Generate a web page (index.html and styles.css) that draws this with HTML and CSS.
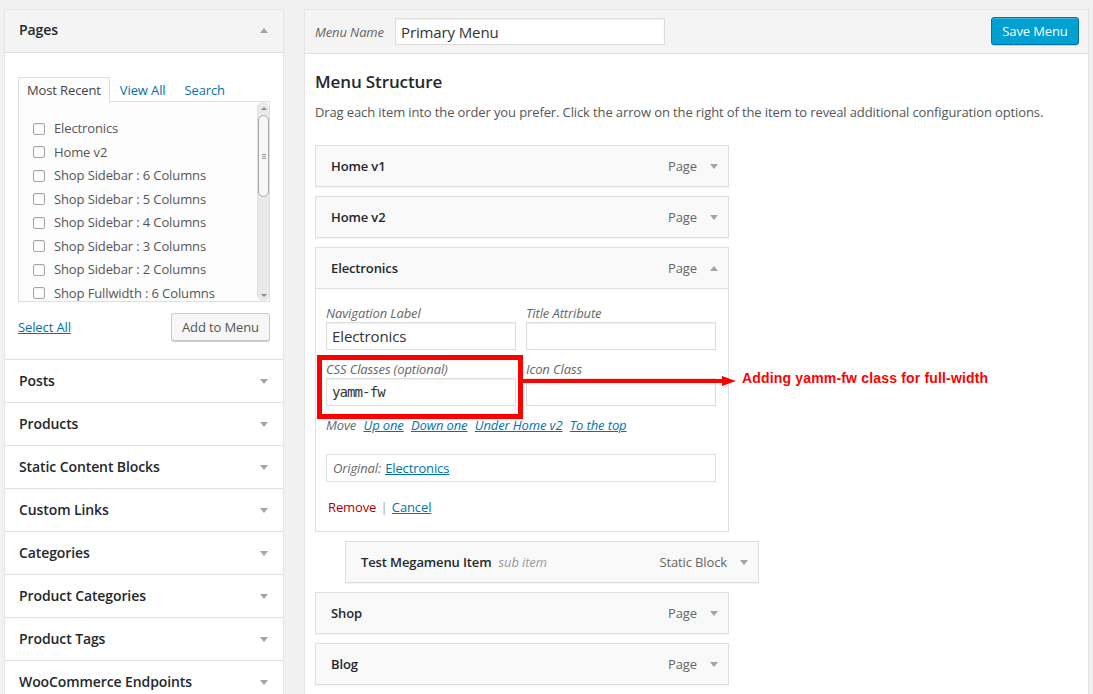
FILE: index.html
```html
<!DOCTYPE html>
<html>
<head>
<meta charset="utf-8">
<title>Menus</title>
<link rel="stylesheet" href="styles.css">
</head>
<body>
<div class="page">
  <aside class="side">
    <section class="acc open">
      <div class="acc-h"><h3>Pages</h3><span class="tri up"></span></div>
      <div class="acc-b">
        <ul class="tabs">
          <li class="active">Most Recent</li>
          <li><a>View All</a></li>
          <li><a>Search</a></li>
        </ul>
        <div class="tabs-panel">
          <ul class="checklist">
            <li><span class="cb"></span>Electronics</li>
            <li><span class="cb"></span>Home v2</li>
            <li><span class="cb"></span>Shop Sidebar : 6 Columns</li>
            <li><span class="cb"></span>Shop Sidebar : 5 Columns</li>
            <li><span class="cb"></span>Shop Sidebar : 4 Columns</li>
            <li><span class="cb"></span>Shop Sidebar : 3 Columns</li>
            <li><span class="cb"></span>Shop Sidebar : 2 Columns</li>
            <li><span class="cb"></span>Shop Fullwidth : 6 Columns</li>
          </ul>
          <div class="sbar">
            <span class="sb-btn"><span class="sb-up"></span></span>
            <span class="sb-thumb"><span class="grip"></span></span>
            <span class="sb-track"></span>
            <span class="sb-btn"><span class="sb-down"></span></span>
          </div>
        </div>
        <div class="actions">
          <a class="link">Select All</a>
          <span class="btn">Add to Menu</span>
        </div>
      </div>
    </section>
    <section class="acc"><div class="acc-h"><h3>Posts</h3><span class="tri"></span></div></section>
    <section class="acc"><div class="acc-h"><h3>Products</h3><span class="tri"></span></div></section>
    <section class="acc"><div class="acc-h"><h3>Static Content Blocks</h3><span class="tri"></span></div></section>
    <section class="acc"><div class="acc-h"><h3>Custom Links</h3><span class="tri"></span></div></section>
    <section class="acc"><div class="acc-h"><h3>Categories</h3><span class="tri"></span></div></section>
    <section class="acc"><div class="acc-h"><h3>Product Categories</h3><span class="tri"></span></div></section>
    <section class="acc"><div class="acc-h"><h3>Product Tags</h3><span class="tri"></span></div></section>
    <section class="acc"><div class="acc-h"><h3>WooCommerce Endpoints</h3><span class="tri"></span></div></section>
  </aside>

  <main class="menu">
    <div class="menu-head">
      <label class="mn-label">Menu Name</label>
      <div class="field name-field">Primary Menu</div>
      <span class="btn-primary">Save Menu</span>
    </div>
    <div class="menu-body">
      <h3 class="ms-title">Menu Structure</h3>
      <p class="ms-desc">Drag each item into the order you prefer. Click the arrow on the right of the item to reveal additional configuration options.</p>

      <div class="item">
        <div class="item-h"><span class="it-title">Home v1</span><span class="it-type">Page</span><span class="tri"></span></div>
      </div>
      <div class="item">
        <div class="item-h"><span class="it-title">Home v2</span><span class="it-type">Page</span><span class="tri"></span></div>
      </div>
      <div class="item">
        <div class="item-h"><span class="it-title">Electronics</span><span class="it-type">Page</span><span class="tri up"></span></div>
        <div class="item-s">
          <div class="grid">
            <div class="fld"><span class="lbl">Navigation Label</span><div class="field">Electronics</div></div>
            <div class="fld"><span class="lbl">Title Attribute</span><div class="field"></div></div>
            <div class="fld"><span class="lbl">CSS Classes (optional)</span><div class="field mono">yamm-fw</div></div>
            <div class="fld"><span class="lbl">Icon Class</span><div class="field"></div></div>
          </div>
          <div class="move">Move <a>Up one</a> <a>Down one</a> <a>Under Home v2</a> <a>To the top</a></div>
          <div class="orig"><em>Original:</em> <a>Electronics</a></div>
          <div class="ctrl"><span class="remove">Remove</span> <span class="sep">|</span> <a>Cancel</a></div>
        </div>
      </div>
      <div class="item sub">
        <div class="item-h"><span class="it-title">Test Megamenu Item</span><span class="it-sub">sub item</span><span class="it-type">Static Block</span><span class="tri"></span></div>
      </div>
      <div class="item">
        <div class="item-h"><span class="it-title">Shop</span><span class="it-type">Page</span><span class="tri"></span></div>
      </div>
      <div class="item">
        <div class="item-h"><span class="it-title">Blog</span><span class="it-type">Page</span><span class="tri"></span></div>
      </div>
    </div>
  </main>

  <div class="annot-box"></div>
  <svg class="annot-arrow" width="216" height="12" viewBox="0 0 216 12">
    <rect x="0" y="4" width="202" height="4" fill="#f00"/>
    <polygon points="200,1 214,6 200,11" fill="#f00"/>
  </svg>
  <div class="annot-text">Adding yamm-fw class for full-width</div>
</div>
</body>
</html>
```

FILE: styles.css
```css
* { box-sizing: border-box; }
html, body { margin: 0; }
body {
  background: #f1f1f1;
  font-family: "Open Sans", "DejaVu Sans", sans-serif;
  font-size: 13px;
  letter-spacing: -0.12px;
  color: #444;
}
a { color: #0073aa; cursor: pointer; }
ul { list-style: none; margin: 0; padding: 0; }
h3 { margin: 0; }

.page {
  position: relative;
  display: flex;
  align-items: flex-start;
  gap: 20px;
  padding: 9px 4px 0 4px;
  height: 694px;
  overflow: hidden;
}

/* ---------- left accordion ---------- */
.side {
  width: 280px;
  flex: none;
  background: #fff;
  border: 1px solid #e5e5e5;
  box-shadow: 0 1px 1px rgba(0,0,0,.04);
}
.acc + .acc { border-top: 1px solid #e1e1e1; }
.acc-h {
  height: 42px;
  display: flex;
  align-items: center;
  justify-content: space-between;
  padding: 0 15px 2px 14px;
}
.acc-h .tri { margin-top: 2px; }
.acc-h h3 {
  font-size: 14px;
  font-weight: 600;
  color: #23282d;
  letter-spacing: -0.1px;
}
.open .acc-h {
  height: 43px;
  padding-bottom: 4px;
  background: #f4f4f4;
  border-bottom: 1px solid #e1e1e1;
}
.tri {
  width: 0; height: 0;
  border-left: 4px solid transparent;
  border-right: 4px solid transparent;
  border-top: 5px solid #a0a5aa;
}
.tri.up {
  border-top: 0;
  border-bottom: 5px solid #a0a5aa;
}
.acc-b {
  padding: 24px 13px 18px 13px;
}
.tabs {
  display: flex;
  height: 25px;
  position: relative;
  z-index: 1;
  margin-bottom: -1px;
}
.tabs li {
  padding: 0 8px;
  margin-right: 1px;
  line-height: 25px;
  border: 1px solid transparent;
  border-bottom: 0;
}
.tabs li a { text-decoration: none; color: #0073aa; }
.tabs li.active {
  border-color: #dfdfdf;
  background: #fdfdfd;
  color: #444;
  height: 26px;
}
.tabs-panel {
  height: 201px;
  border: 1px solid #dfdfdf;
  background: #fdfdfd;
  display: flex;
  overflow: hidden;
}
.checklist {
  flex: 1;
  padding: 15px 0 0 14px;
  color: #555;
}
.checklist li {
  height: 23.5px;
  line-height: 23.5px;
  display: flex;
  align-items: center;
  white-space: nowrap;
}
.cb {
  width: 12px; height: 12px;
  border: 1px solid #a5a5a5;
  border-radius: 2px;
  background: #fff;
  margin-right: 9px;
  flex: none;
  box-shadow: inset 0 1px 2px rgba(0,0,0,.08);
}
.sbar {
  width: 12px;
  flex: none;
  display: flex;
  flex-direction: column;
  background: #e9e9e9;
  border-left: 1px solid #e0e0e0;
  border-radius: 6px;
}
.sb-btn {
  height: 12px;
  display: flex;
  align-items: center;
  justify-content: center;
  flex: none;
}
.sb-up, .sb-down {
  width: 0; height: 0;
  border-left: 3px solid transparent;
  border-right: 3px solid transparent;
}
.sb-up { border-bottom: 3px solid #8a8a8a; }
.sb-down { border-top: 3px solid #8a8a8a; }
.sb-thumb {
  height: 82px;
  flex: none;
  margin: 1px 0;
  background: #f7f7f7;
  border: 1px solid #a8a8a8;
  border-radius: 6px;
  display: flex;
  align-items: center;
  justify-content: center;
}
.grip {
  width: 4px; height: 5px;
  border-top: 1px solid #999;
  border-bottom: 1px solid #999;
  position: relative;
}
.grip::after {
  content: "";
  position: absolute;
  left: 0; right: 0; top: 1px;
  border-top: 1px solid #999;
}
.sb-track { flex: 1; }
.actions {
  display: flex;
  align-items: center;
  justify-content: space-between;
  margin-top: 11px;
}
.link { text-decoration: underline; }
.btn {
  height: 28px;
  width: 99px;
  padding: 0;
  display: inline-flex;
  align-items: center;
  justify-content: center;
  white-space: nowrap;
  border: 1px solid #ccc;
  border-radius: 3px;
  background: #f7f7f7;
  color: #555;
  font-size: 13px;
  box-shadow: 0 1px 0 #ccc;
}

/* ---------- right menu panel ---------- */
.menu {
  flex: 1;
  height: 700px;
  background: #fff;
  border: 1px solid #e5e5e5;
  box-shadow: 0 1px 1px rgba(0,0,0,.04);
}
.menu-head {
  height: 44px;
  display: flex;
  align-items: center;
  padding: 0 9px 0 10px;
  background: #f4f4f4;
  border-bottom: 1px solid #e1e1e1;
}
.mn-label {
  width: 80px;
  font-style: italic;
  color: #666;
}
.field {
  height: 28px;
  border: 1px solid #ddd;
  background: #fff;
  box-shadow: inset 0 1px 2px rgba(0,0,0,.07);
  padding: 0 5px;
  display: flex;
  align-items: center;
  font-size: 15px;
  color: #333;
}
.name-field { width: 270px; height: 27px; }
.btn-primary {
  margin-left: auto;
  height: 28px;
  width: 88px;
  display: inline-flex;
  align-items: center;
  justify-content: center;
  background: #00a0d2;
  border: 1px solid #0073aa;
  border-radius: 3px;
  color: #fff;
  box-shadow: inset 0 1px 0 rgba(120,200,230,.5), 0 1px 0 rgba(0,0,0,.15);
  margin-top: -1px;
}
.menu-body {
  padding: 17px 10px 0 10px;
}
.ms-title {
  font-size: 17px;
  font-weight: 600;
  color: #23282d;
  line-height: 22px;
}
.ms-desc {
  margin: 10px 0 24px;
  line-height: 18px;
  color: #555;
}
.item {
  width: 414px;
  margin-bottom: 9px;
}
.item.sub { margin-left: 30px; }
.item-h {
  height: 42px;
  border: 1px solid #dfdfdf;
  background: #f9f9f9;
  display: flex;
  align-items: center;
  padding: 0 10px 0 15px;
  box-shadow: 0 1px 1px rgba(0,0,0,.04);
}
.it-title {
  font-weight: 600;
  color: #23282d;
}
.it-sub {
  font-style: italic;
  color: #999;
  margin-left: 7px;
}
.it-type {
  margin-left: auto;
  color: #666;
  margin-right: 13px;
}
.item-s {
  border: 1px solid #dfdfdf;
  border-top: 0;
  padding: 15px 10px 15px 10px;
  background: #fff;
}
.grid {
  display: grid;
  grid-template-columns: 190px 190px;
  column-gap: 10px;
  row-gap: 10px;
}
.lbl {
  display: block;
  height: 18px;
  line-height: 18px;
  font-style: italic;
  color: #666;
}
.mono {
  font-family: "DejaVu Sans Mono", monospace;
  font-size: 14px;
  letter-spacing: -0.9px;
  color: #333;
}
.move {
  margin-top: 10px;
  line-height: 18px;
  font-style: italic;
  color: #666;
}
.move a { margin-left: 4px; text-decoration: underline; }
.orig {
  margin-top: 20px;
  width: 390px;
  height: 28px;
  border: 1px solid #dfdfdf;
  display: flex;
  align-items: center;
  padding: 0 6px;
  gap: 4px;
  color: #666;
}
.orig a { text-decoration: underline; }
.ctrl {
  margin-top: 16px;
  line-height: 18px;
  padding-left: 2px;
}
.ctrl a { text-decoration: underline; }
.remove { color: #a00; }
.sep { color: #a0a0a0; margin: 0 1px; }

/* ---------- annotation overlay ---------- */
.annot-box {
  position: absolute;
  left: 317px;
  top: 355px;
  width: 206px;
  height: 64px;
  border: 5px solid #f00;
}
.annot-arrow {
  position: absolute;
  left: 522px;
  top: 375px;
}
.annot-text {
  position: absolute;
  left: 742px;
  top: 369px;
  font-family: "Liberation Sans", Arial, sans-serif;
  font-weight: bold;
  font-size: 14px;
  letter-spacing: 0.17px;
  line-height: 18px;
  color: #f00;
}
```
